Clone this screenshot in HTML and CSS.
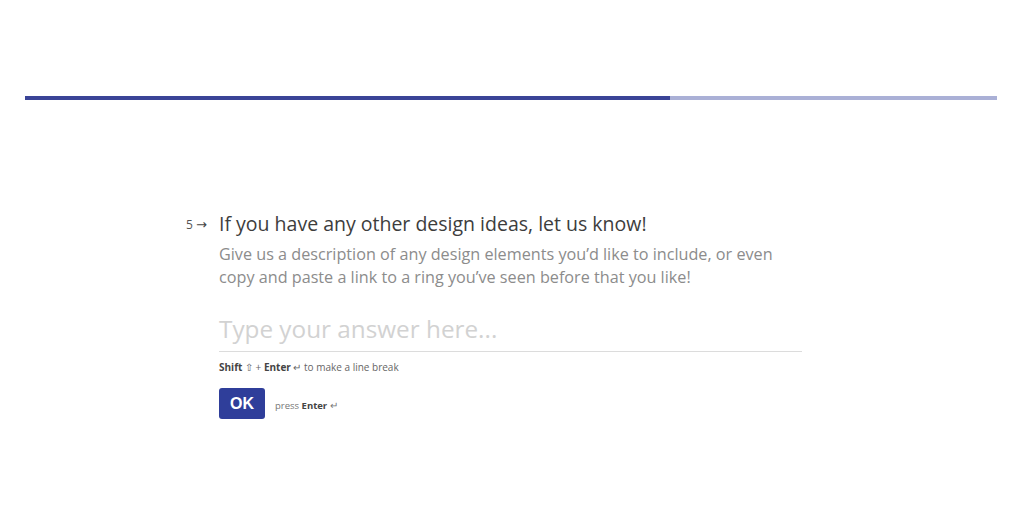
FILE: index.html
```html
<!DOCTYPE html>
<html lang="en">
<head>
    <meta charset="UTF-8">
    <meta name="viewport" content="width=device-width, initial-scale=1.0">
    <title>Ring Design Form</title>
    <link rel="stylesheet" href="styles.css">
</head>
<body>
    <div class="progress">
        <div class="progress-fill"></div>
    </div>

    <div class="question">
        <div class="question-number">5 <span class="arrow">&rarr;</span></div>
        <div class="question-body">
            <h2>If you have any other design ideas, let us know!</h2>
            <p class="description">Give us a description of any design elements you’d like to include, or even copy and paste a link to a ring you’ve seen before that you like!</p>

            <div class="answer">Type your answer here...</div>
            <p class="hint"><b>Shift</b> &#8679; + <b>Enter</b> &#8629; to make a line break</p>

            <div class="actions">
                <button class="ok-button">OK</button>
                <span class="press">press <b>Enter</b> &#8629;</span>
            </div>
        </div>
    </div>
</body>
</html>
```

FILE: styles.css
```css
* {
    margin: 0;
    padding: 0;
    box-sizing: border-box;
}

body {
    font-family: 'Open Sans', 'Liberation Sans', sans-serif;
    background: #fff;
    width: 1024px;
    height: 512px;
    overflow: hidden;
}

.progress {
    margin: 96px 27px 0 25px;
    height: 4px;
    background: #aab0d6;
    display: flex;
}

.progress-fill {
    width: 645px;
    height: 100%;
    background: #3a4497;
}

.question {
    display: flex;
    margin-top: 110px;
    padding-left: 186px;
}

.question-number {
    width: 33px;
    font-size: 12px;
    color: #555;
    padding-top: 6px;
    white-space: nowrap;
}

.question-number .arrow {
    font-family: 'DejaVu Sans', sans-serif;
    font-size: 13px;
    line-height: 12px;
    color: #444;
}

.question-body {
    width: 583px;
}

.question-body h2 {
    font-size: 19.5px;
    font-weight: 400;
    color: #3d3d3d;
    line-height: 28px;
}

.description {
    margin-top: 5px;
    font-size: 16.2px;
    line-height: 23px;
    color: #8c8c8c;
}

.answer {
    margin-top: 23px;
    font-size: 24.3px;
    color: #d2d2d2;
    line-height: 34px;
    padding-bottom: 5px;
    border-bottom: 1px solid #dcdcdc;
}

.hint {
    margin-top: 8px;
    font-size: 10px;
    color: #666;
    line-height: 14px;
}

.hint b {
    color: #444;
}

.actions {
    margin-top: 14px;
    display: flex;
    align-items: center;
    gap: 10px;
}

.ok-button {
    background: #2f3e9a;
    color: #fff;
    border: none;
    border-radius: 3px;
    width: 46px;
    height: 31px;
    font-family: 'Liberation Sans', Arial, sans-serif;
    font-size: 16px;
    font-weight: 700;
}

.press {
    font-size: 9.5px;
    color: #777;
    padding-top: 3px;
}

.press b {
    color: #444;
}
```
